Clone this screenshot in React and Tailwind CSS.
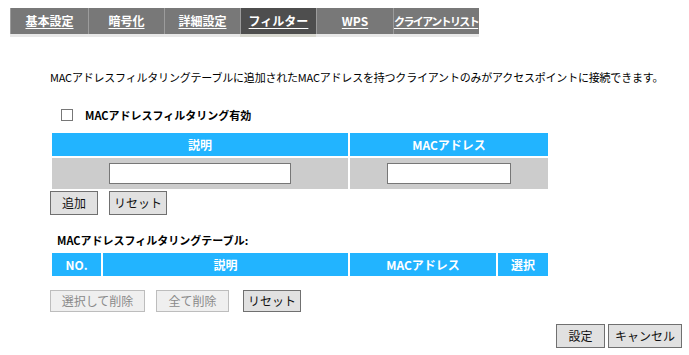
import React from "react";

const font = { fontFamily: '"Noto Sans CJK JP", "Noto Sans", sans-serif' };

function Tab({ label, w, active }) {
  return (
    <div
      className={`h-full ${w} overflow-hidden whitespace-nowrap text-center text-[12px] font-bold leading-[26px] text-white underline underline-offset-2 border-l border-l-[#9c9c9c] ${active ? "bg-[#4e4e4e]" : ""}`}
    >
      {label}
    </div>
  );
}

function Btn({ children, w, disabled, className = "" }) {
  return (
    <div
      className={`${w} flex items-center justify-center text-[12px] border ${disabled ? "border-[#bdbdbd] bg-[#efefef] text-[#8a8a8a]" : "border-[#707070] bg-[#e1e1e1] text-[#111]"} ${className}`}
    >
      {children}
    </div>
  );
}

export default function App() {
  return (
    <div className="w-[689px] h-[355px] bg-white relative overflow-hidden text-black" style={font}>
      {/* Tab bar */}
      <div className="ml-[10px] pt-[8px] w-[469px]">
        <div className="flex h-[26px] bg-[#787878]">
          <Tab label="基本設定" w="w-[78px]" />
          <Tab label="暗号化" w="w-[76px]" />
          <Tab label="詳細設定" w="w-[76px]" />
          <Tab label="フィルター" w="w-[76px]" active />
          <Tab label="WPS" w="w-[77px]" />
          <div className="h-full flex-1 overflow-hidden whitespace-nowrap text-[11px] tracking-[-1.6px] font-bold leading-[26px] text-white underline underline-offset-2 border-l border-l-[#9c9c9c]">
            クライアントリスト
          </div>
        </div>
        <div className="flex h-[3px] bg-[#e8e8e8]">
          <div className="w-[230px]" />
          <div className="w-[76px] bg-[#d8d8d0]" />
        </div>
      </div>

      {/* Description */}
      <div className="mt-[33px] ml-[50px] text-[11px] leading-[14px] whitespace-nowrap tracking-[-0.2px]">
        MACアドレスフィルタリングテーブルに追加されたMACアドレスを持つクライアントのみがアクセスポイントに接続できます。
      </div>

      {/* Checkbox */}
      <div className="mt-[24px] ml-[61px] flex items-center h-[14px]">
        <div className="w-[12px] h-[12px] border border-[#777] bg-white" />
        <div className="ml-[12px] text-[11px] font-bold leading-[14px] whitespace-nowrap">
          MACアドレスフィルタリング有効
        </div>
      </div>

      {/* Table 1 */}
      <div className="mt-[11px] ml-[52px] w-[496px] grid grid-cols-[296px_198px] gap-[2px]">
        <div className="h-[23px] bg-[#22b4ff] text-white font-bold text-[12px] flex items-center justify-center">説明</div>
        <div className="h-[23px] bg-[#22b4ff] text-white font-bold text-[12px] flex items-center justify-center">MACアドレス</div>
        <div className="h-[31px] bg-[#cccccc] flex items-center justify-center">
          <div className="w-[182px] h-[21px] bg-white border border-[#777]" />
        </div>
        <div className="h-[31px] bg-[#cccccc] flex items-center justify-center">
          <div className="w-[124px] h-[21px] bg-white border border-[#777]" />
        </div>
      </div>

      {/* Buttons 1 */}
      <div className="mt-[2px] ml-[50px] flex gap-[11px] h-[24px]">
        <Btn w="w-[48px]">追加</Btn>
        <Btn w="w-[58px]">リセット</Btn>
      </div>

      {/* Table label */}
      <div className="mt-[18px] ml-[57px] text-[11px] font-bold leading-[14px] whitespace-nowrap">
        MACアドレスフィルタリングテーブル:
      </div>

      {/* Table 2 */}
      <div className="mt-[6px] ml-[52px] w-[496px] grid grid-cols-[49px_245px_146px_50px] gap-[2px]">
        <div className="h-[23px] bg-[#22b4ff] text-white font-bold text-[12px] flex items-center justify-center">NO.</div>
        <div className="h-[23px] bg-[#22b4ff] text-white font-bold text-[12px] flex items-center justify-center">説明</div>
        <div className="h-[23px] bg-[#22b4ff] text-white font-bold text-[12px] flex items-center justify-center">MACアドレス</div>
        <div className="h-[23px] bg-[#22b4ff] text-white font-bold text-[12px] flex items-center justify-center">選択</div>
      </div>

      {/* Buttons 2 */}
      <div className="mt-[14px] ml-[50px] flex h-[22px]">
        <Btn w="w-[95px]" disabled>選択して削除</Btn>
        <Btn w="w-[73px]" disabled className="ml-[11px]">全て削除</Btn>
        <Btn w="w-[58px]" className="ml-[14px]">リセット</Btn>
      </div>

      {/* Bottom buttons */}
      <div className="mt-[12px] ml-[556px] flex h-[24px] gap-[3px]">
        <Btn w="w-[49px]">設定</Btn>
        <Btn w="w-[74px]">キャンセル</Btn>
      </div>
    </div>
  );
}
